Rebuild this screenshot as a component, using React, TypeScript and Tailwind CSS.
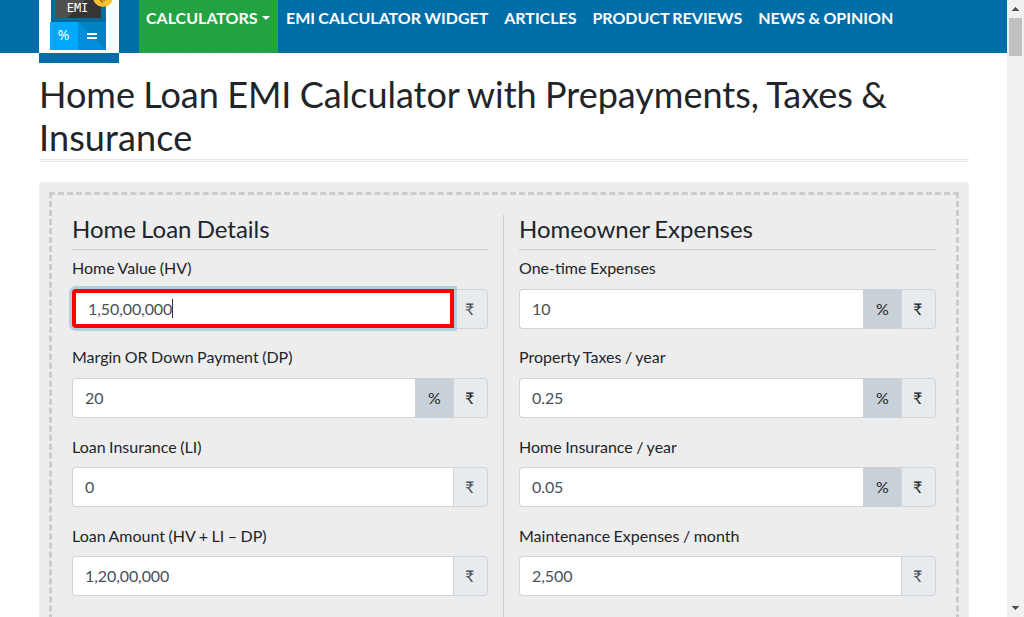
type FieldProps = { label: string; value: string; percent?: boolean; focused?: boolean; dim?: boolean };

function Field({ label, value, percent, focused, dim }: FieldProps) {
  return (
    <div className="h-[89.1px]">
      <div className="h-[32.7px] pt-[0.35px] leading-6 [word-spacing:-0.6px]">{label}</div>
      <div className="flex h-[39.85px] text-[#495057]">
        {focused ? (
          <div className="relative z-10 -mr-px flex h-[39px] flex-1 items-center rounded-l-[4px] border-4 border-[#ff0000] bg-white pl-3 pt-px tracking-[-0.08px] shadow-[0_0_0_3px_#b2cfde]">
            {value}
            <span className="h-[19px] w-px bg-[#333333]" />
          </div>
        ) : (
          <div className="flex flex-1 items-center rounded-l-[4px] border border-r-0 border-[#ced4da] bg-white pl-3 pt-px tracking-[-0.08px]">{value}</div>
        )}
        {percent && (
          <div className="flex w-[38px] items-center justify-center bg-[#c9d1d8] pl-px pt-px text-[#212529]">%</div>
        )}
        <div
          className={
            "flex w-[35px] items-center justify-center rounded-r-[4px] border border-[#ced4da] bg-[#e7ebee] pr-[2px] " +
            (dim ? "text-[#495057]" : "text-[#212529]")
          }
        >
          ₹
        </div>
      </div>
    </div>
  );
}

function Logo() {
  return (
    <svg width="80" height="53" viewBox="0 0 80 53" className="block">
      <rect width="80" height="53" fill="#fff" />
      <path d="M12 0H67V22H12Z" fill="#007db5" />
      <path d="M12 0H16V22H12ZM62 0H66V18L67 22H12V18H62Z" fill="#006c9e" />
      <path d="M16 0H62V18H16Z" fill="#353535" />
      <path d="M16 0H46L28 18H16Z" fill="#505050" />
      <text x="38.5" y="12" fill="#fff" fontSize="12" textAnchor="middle" fontFamily="DejaVu Sans Mono, monospace">EMI</text>
      <circle cx="64" cy="-3" r="10" fill="#fbc02d" />
      <path d="M61 0L64 2.500M64 0H66" stroke="#9b6510" strokeWidth="1.500" />
      <path d="M11 22H39V50H11Z" fill="#00a8ff" />
      <path d="M39 22H67V50H39Z" fill="#008edb" />
      <path d="M39 22H67V50Z" fill="#0082c3" />
      <path d="M39 22L67 50H39Z" fill="#008edb" />
      <text x="24.500" y="40" fill="#fff" fontSize="14" textAnchor="middle" fontFamily="Noto Sans, sans-serif">%</text>
      <path d="M48 33H58V35H48ZM48 37H58V39H48Z" fill="#fff" />
    </svg>
  );
}

export default function App() {
  return (
    <div className="flex h-[617px] w-[1024px] overflow-hidden bg-white font-[Lato,'Noto_Sans',sans-serif] text-base text-[#212529]">
      <main className="h-full w-[1007px] shrink-0 overflow-hidden">
        <header className="flex h-[53px] bg-[#006ea8] bg-[repeating-linear-gradient(90deg,#0000_0_2px,#00000005_2px_3px)] pl-[39px]">
          <div className="relative z-10 h-[63px] w-20 shrink-0 bg-[#006ea8]">
            <Logo />
          </div>
          <nav className="ml-5 flex whitespace-nowrap font-bold leading-6 tracking-[-0.02px] text-white [word-spacing:-0.5px]">
            <a className="flex h-[53px] w-[139px] bg-[#23a443] bg-[repeating-linear-gradient(90deg,#0000_0_2px,#00000005_2px_3px)] pl-[7px] pt-[6px] tracking-normal">
              CALCULATORS
              <svg width="8" height="4" viewBox="0 0 8 4" className="ml-1 mt-[10px]"><path d="M0 0H8L4 4Z" fill="#fff" /></svg>
            </a>
            <a className="pl-2 pt-[6px]">EMI CALCULATOR WIDGET</a>
            <a className="pl-4 pt-[6px]">ARTICLES</a>
            <a className="pl-4 pt-[6px]">PRODUCT REVIEWS</a>
            <a className="pl-4 pt-[6px]">NEWS &amp; OPINION</a>
          </nav>
        </header>
        <div className="ml-[39px] w-[930px]">
          <h1 className="mt-5 h-[89px] border-b-[3px] border-double border-[#e5e5e5] text-[36px] leading-[43px] [word-spacing:-0.9px]">
            Home Loan EMI Calculator with Prepayments, Taxes &amp; <span className="tracking-[0.12px]">Insurance</span>
          </h1>
          <section className="mt-5 h-[700px] rounded-[4px] bg-[#ededed] p-[10px]">
            <div className="flex h-full border-[3px] border-dashed border-[#cccccc] pl-5 pt-5">
              <div className="w-[431px] pr-[15px]">
                <h2 className="mb-[6px] h-[35px] border-b border-[#c9cbcd] text-2xl leading-[28px] [word-spacing:-1px]">Home Loan Details</h2>
                <Field label="Home Value (HV)" value="1,50,00,000" focused dim />
                <Field label="Margin OR Down Payment (DP)" value="20" percent />
                <Field label="Loan Insurance (LI)" value="0" dim />
                <Field label="Loan Amount (HV + LI – DP)" value="1,20,00,000" dim />
              </div>
              <div className="w-[433px] border-l border-[#c9cbcd] pl-[15px]">
                <h2 className="mb-[6px] h-[35px] border-b border-[#c9cbcd] text-2xl leading-[28px] [word-spacing:-1.5px]">Homeowner Expenses</h2>
                <Field label="One-time Expenses" value="10" percent />
                <Field label="Property Taxes / year" value="0.25" percent />
                <Field label="Home Insurance / year" value="0.05" percent />
                <Field label="Maintenance Expenses / month" value="2,500" dim />
              </div>
            </div>
          </section>
        </div>
      </main>
      <aside className="flex h-full w-[17px] shrink-0 flex-col items-center bg-[#f0f0f0]">
        <svg width="7" height="4" viewBox="0 0 7 4" className="mt-[7px]" shapeRendering="crispEdges"><path d="M3 0H4V1H5V2H6V3H7V4H0V3H1V2H2V1H3Z" fill="#505050" /></svg>
        <div className="mt-[7px] h-[38px] w-[13px] bg-[#c1c1c1]" />
        <svg width="7" height="4" viewBox="0 0 7 4" className="mb-[7px] mt-auto" shapeRendering="crispEdges"><path d="M0 0H7V1H6V2H5V3H4V4H3V3H2V2H1V1H0Z" fill="#505050" /></svg>
      </aside>
    </div>
  );
}
